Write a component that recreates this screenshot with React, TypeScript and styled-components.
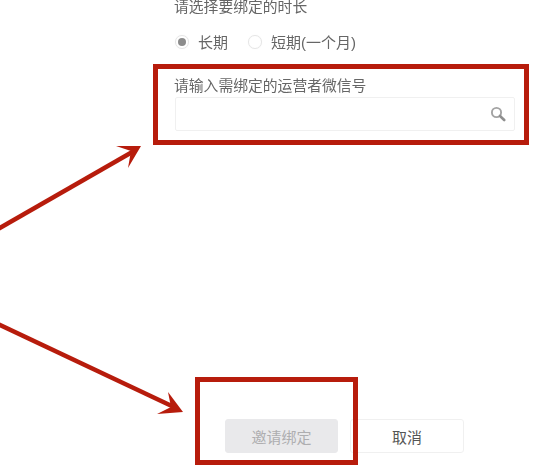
import React from "react";
import styled, { createGlobalStyle } from "styled-components";

const Global = createGlobalStyle`
  html, body { margin: 0; padding: 0; background: #fff; }
  body { font-family: "Liberation Sans", "Noto Sans CJK SC", sans-serif; }
`;

const Page = styled.div`
  position: relative;
  width: 538px;
  height: 475px;
  overflow: hidden;
  background: #fff;
`;

const Form = styled.div`
  display: flex;
  flex-direction: column;
  height: 475px;
  box-sizing: border-box;
  padding: 0 23px 22px 175px;
  filter: blur(0.35px);
`;

const Label = styled.div<{ $first?: boolean }>`
  font-size: 14.8px;
  line-height: 20px;
  color: #666;
  margin-left: -1px;
  margin-top: ${(p) => (p.$first ? "-3px" : "0")};
`;

const Radios = styled.div`
  display: flex;
  align-items: center;
  margin-top: 15px;
  height: 20px;
`;

const RadioItem = styled.div`
  display: flex;
  align-items: center;
  gap: 9px;
  margin-right: 20px;
  font-size: 15px;
  color: #666;
`;

const RadioText = styled.span`
  margin-bottom: 2px;
`;

const RadioDot = styled.span<{ $checked?: boolean }>`
  width: 14px;
  height: 14px;
  box-sizing: border-box;
  border-radius: 50%;
  border: 1px solid #e4e4e4;
  box-shadow: 0 0 1px #ececec;
  display: flex;
  align-items: center;
  justify-content: center;
  &::after {
    content: "";
    width: 8px;
    height: 8px;
    border-radius: 50%;
    background: ${(p) => (p.$checked ? "#8c8c8c" : "transparent")};
  }
`;

const InputSection = styled.div`
  display: flex;
  flex-direction: column;
  margin-top: 24px;
  gap: 1px;
`;

const SearchBox = styled.div`
  height: 34px;
  box-sizing: border-box;
  border: 1px solid #f0f0f0;
  border-radius: 2px;
  display: flex;
  align-items: center;
  justify-content: flex-end;
  padding-right: 8px;
`;

const Actions = styled.div`
  display: flex;
  gap: 12px;
  margin-top: auto;
  margin-left: 50px;
`;

const Button = styled.div<{ $disabled?: boolean }>`
  width: ${(p) => (p.$disabled ? "113px" : "114px")};
  height: 34px;
  box-sizing: border-box;
  display: flex;
  align-items: center;
  justify-content: center;
  border-radius: 3px;
  font-size: 15px;
  background: ${(p) => (p.$disabled ? "#e9e9eb" : "#fff")};
  border: 1px solid ${(p) => (p.$disabled ? "#e9e9eb" : "#f0f0f0")};
  color: ${(p) => (p.$disabled ? "#aeaeb0" : "#555")};
`;

const Highlight = styled.div<{ $left: number; $top: number; $w: number; $h: number }>`
  position: absolute;
  left: ${(p) => p.$left}px;
  top: ${(p) => p.$top}px;
  width: ${(p) => p.$w}px;
  height: ${(p) => p.$h}px;
  box-sizing: border-box;
  border: 5px solid #b71c0c;
`;

const Arrows = styled.svg`
  position: absolute;
  left: 0;
  top: 0;
  width: 538px;
  height: 475px;
  pointer-events: none;
`;

export default function App() {
  return (
    <Page>
      <Global />
      <Form>
        <Label $first>请选择要绑定的时长</Label>
        <Radios>
          <RadioItem>
            <RadioDot $checked />
            <RadioText>长期</RadioText>
          </RadioItem>
          <RadioItem>
            <RadioDot />
            <RadioText>短期(一个月)</RadioText>
          </RadioItem>
        </Radios>
        <InputSection>
          <Label>请输入需绑定的运营者微信号</Label>
          <SearchBox>
            <svg width="16" height="16" viewBox="0 0 16 16" fill="none">
              <circle cx="6.5" cy="6.5" r="4.6" stroke="#a3a3a3" strokeWidth="1.9" />
              <path d="M10 10 L14.2 14" stroke="#8f8f8f" strokeWidth="2.6" strokeLinecap="round" />
            </svg>
          </SearchBox>
        </InputSection>
        <Actions>
          <Button $disabled>邀请绑定</Button>
          <Button>取消</Button>
        </Actions>
      </Form>
      <Highlight $left={153} $top={64} $w={376} $h={81} />
      <Highlight $left={195} $top={377} $w={163} $h={88} />
      <Arrows viewBox="0 0 538 475">
        <path d="M-2 229 L134 151" stroke="#b71c0c" strokeWidth="4.4" fill="none" />
        <path d="M141 146 L116 146 L131 151 L128 168 Z" fill="#b71c0c" />
        <path d="M-2 324 L176 408" stroke="#b71c0c" strokeWidth="4.4" fill="none" />
        <path d="M183 412 L168 392 L171 407 L157 414 Z" fill="#b71c0c" />
      </Arrows>
    </Page>
  );
}
